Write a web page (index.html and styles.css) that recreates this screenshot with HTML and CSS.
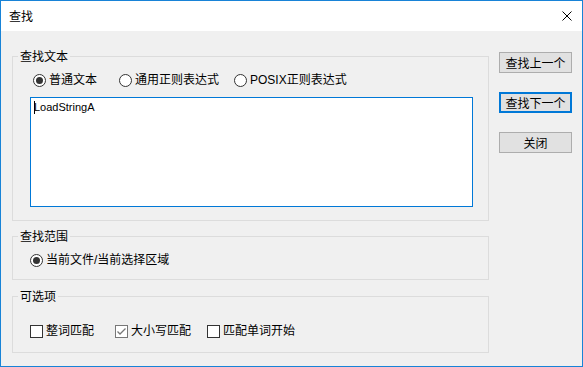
FILE: index.html
```html
<!DOCTYPE html>
<html lang="zh-CN">
<head>
  <meta charset="UTF-8" />
  <title>查找</title>
  <link rel="stylesheet" href="styles.css">
</head>
<body>
  <div class="window">
    <!-- Title bar -->
    <div class="titlebar">
      <span class="title">查找</span>
      <svg class="close" width="10" height="10" viewBox="0 0 10 10">
        <path d="M0.5 0.5 L9.5 9.5 M9.5 0.5 L0.5 9.5" stroke="#000" stroke-width="1" fill="none"/>
      </svg>
    </div>

    <div class="content">
      <div class="groups">
        <!-- Search text group -->
        <fieldset class="group group-text">
          <legend>查找文本</legend>
          <div class="option-row shift">
            <label class="opt w86"><span class="radio checked"></span>普通文本</label>
            <label class="opt w115"><span class="radio"></span>通用正则表达式</label>
            <label class="opt"><span class="radio"></span>POSIX正则表达式</label>
          </div>
          <div class="textbox"><span class="caret"></span>LoadStringA</div>
        </fieldset>

        <!-- Scope group -->
        <fieldset class="group group-scope">
          <legend>查找范围</legend>
          <div class="option-row">
            <label class="opt"><span class="radio checked"></span>当前文件/当前选择区域</label>
          </div>
        </fieldset>

        <!-- Options group -->
        <fieldset class="group group-opts">
          <legend>可选项</legend>
          <div class="option-row">
            <label class="opt w85"><span class="check"></span>整词匹配</label>
            <label class="opt w92"><span class="check checked">
              <svg width="11" height="11" viewBox="0 0 11 11"><path d="M1.5 5.5 L4 8 L9.5 2.5" stroke="#777" stroke-width="1.3" fill="none"/></svg>
            </span>大小写匹配</label>
            <label class="opt"><span class="check"></span>匹配单词开始</label>
          </div>
        </fieldset>
      </div>

      <!-- Action buttons -->
      <div class="buttons">
        <button class="btn">查找上一个</button>
        <button class="btn default">查找下一个</button>
        <button class="btn">关闭</button>
      </div>
    </div>
  </div>
</body>
</html>
```

FILE: styles.css
```css
* { box-sizing: border-box; }

body {
  margin: 0;
  font-family: "Noto Sans CJK SC", sans-serif;
  font-size: 12px;
  color: #000;
  background: #fff;
}

/* Dialog frame */
.window {
  width: 583px;
  height: 367px;
  border: 1px solid #1883d7;
  background: #f0f0f0;
  display: flex;
  flex-direction: column;
}

.titlebar {
  height: 30px;
  background: #fff;
  display: flex;
  align-items: center;
  justify-content: space-between;
  padding: 0 10px 0 8px;
  line-height: 16px;
}

.close { display: block; }

.content {
  display: flex;
  padding: 17px 0 0 11px;
}

.groups {
  width: 477px;
  display: flex;
  flex-direction: column;
  gap: 7px;
}

/* Group boxes */
.group {
  margin: 0;
  border: 1px solid #dcdcdc;
  padding: 8px 15px 11px 17px;
  min-width: 0;
}

.group legend {
  padding: 0 2px;
  margin-left: -12px;
  line-height: 16px;
  height: 16px;
}

.group-text { padding-bottom: 13px; }
.group-opts { padding-top: 19px; padding-bottom: 13px; margin-top: 1px; }

.option-row {
  display: flex;
  align-items: center;
  height: 16px;
  line-height: 16px;
}

.option-row.shift { padding-left: 3px; }

.opt {
  display: flex;
  align-items: center;
  white-space: nowrap;
  font-family: "Liberation Sans", "Noto Sans CJK SC", sans-serif;
}

.w85 { width: 85px; }
.w86 { width: 86px; }
.w92 { width: 92px; }
.w115 { width: 115px; }

/* Radio buttons */
.radio {
  width: 13px;
  height: 13px;
  border: 1px solid #333;
  border-radius: 50%;
  background: #fff;
  margin-right: 3px;
  display: flex;
  align-items: center;
  justify-content: center;
  flex: none;
}

.radio.checked::after {
  content: "";
  width: 7px;
  height: 7px;
  border-radius: 50%;
  background: #333;
}

/* Check boxes */
.check {
  width: 13px;
  height: 13px;
  border: 1px solid #333;
  background: #fff;
  margin-right: 3px;
  flex: none;
  display: flex;
  align-items: center;
  justify-content: center;
}

.check.checked { border-color: #777; }
.check svg { display: block; }

/* Search text field */
.textbox {
  margin-top: 9px;
  height: 110px;
  background: #fff;
  border: 1px solid #0078d7;
  padding: 1px 3px;
  font-family: "Liberation Sans", sans-serif;
  font-size: 11px;
  line-height: 16px;
  position: relative;
}

.caret {
  position: absolute;
  left: 3px;
  top: 3px;
  width: 1px;
  height: 13px;
  background: #000;
}

/* Right side buttons */
.buttons {
  margin-left: 10px;
  padding-top: 4px;
  display: flex;
  flex-direction: column;
  gap: 19px;
}

.btn {
  width: 73px;
  height: 21px;
  margin: 0;
  padding: 0;
  background: #e1e1e1;
  border: 1px solid #adadad;
  font-family: "Noto Sans CJK SC", sans-serif;
  font-size: 12px;
  color: #000;
  line-height: 16px;
}

.btn.default { border: 2px solid #0078d7; }
```
